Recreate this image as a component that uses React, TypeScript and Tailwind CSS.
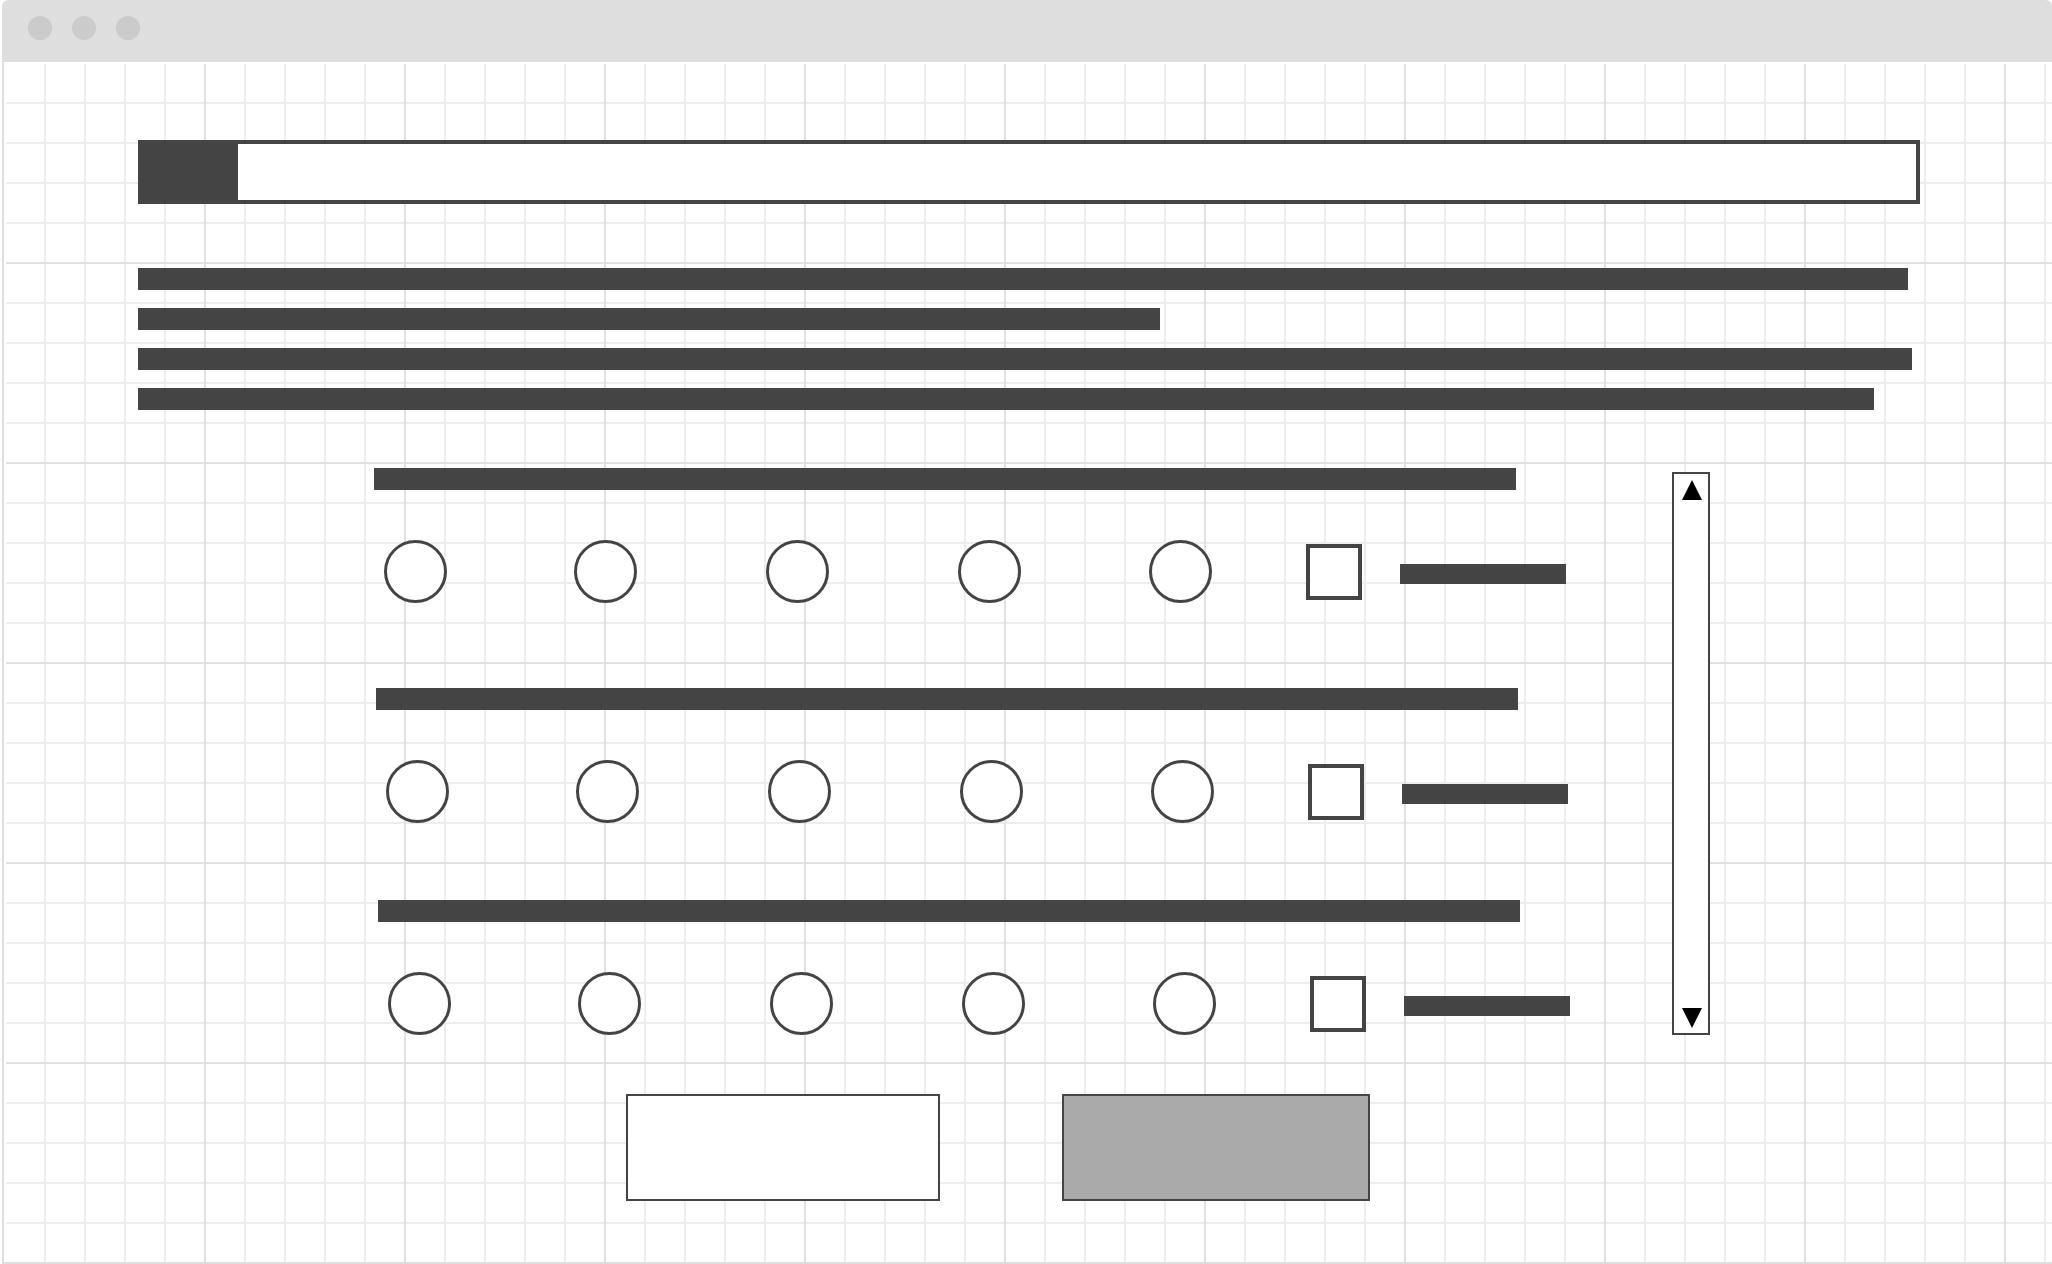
import React from "react";

function Circle({ className }: { className: string }) {
  return (
    <div
      className={
        "w-[63px] h-[63px] shrink-0 rounded-full border-[3px] border-[#444444] bg-white " +
        className
      }
    />
  );
}

function Row({ className }: { className: string }) {
  return (
    <div className={className}>
      <div className="h-[22px] w-[1142px] bg-[#444444]" />
      <div className="mt-[50px] flex items-start">
        <Circle className="ml-[10px]" />
        <Circle className="ml-[127px]" />
        <Circle className="ml-[129px]" />
        <Circle className="ml-[129px]" />
        <Circle className="ml-[128px]" />
        <div className="ml-[94px] mt-[4px] h-[56px] w-[56px] shrink-0 border-4 border-[#444444] bg-white" />
        <div className="ml-[38px] mt-[24px] h-[20px] w-[166px] shrink-0 bg-[#444444]" />
      </div>
    </div>
  );
}

export default function App() {
  return (
    <div className="flex h-[1264px] w-[2052px] flex-col overflow-hidden bg-white pl-[2px]">
      {/* title bar */}
      <div className="flex h-[62px] shrink-0 items-start gap-[20px] rounded-t-[6px] bg-[#dedede] pl-[26px] pt-[16px]">
        <div className="h-[24px] w-[24px] rounded-full bg-[#cbcbcb]" />
        <div className="h-[24px] w-[24px] rounded-full bg-[#cbcbcb]" />
        <div className="h-[24px] w-[24px] rounded-full bg-[#cbcbcb]" />
      </div>
      {/* body */}
      <div className="flex flex-1 flex-col border-b-2 border-l-2 border-[#dedede] bg-white pl-[2px] pt-[2px]">
        <div className="flex-1 [background-image:linear-gradient(to_right,transparent_198px,#e1e1e1_198px,#e1e1e1_200px,transparent_200px),linear-gradient(to_bottom,transparent_198px,#e1e1e1_198px,#e1e1e1_200px,transparent_200px),linear-gradient(to_right,transparent_38px,#ededed_38px,#ededed_40px,transparent_40px),linear-gradient(to_bottom,transparent_38px,#ededed_38px,#ededed_40px,transparent_40px)] [background-size:200px_200px,200px_200px,40px_40px,40px_40px]">
          {/* search bar */}
          <div className="ml-[132px] mt-[76px] flex h-[64px] w-[1782px] border-4 border-[#444444] bg-white">
            <div className="h-full w-[96px] bg-[#444444]" />
          </div>

          {/* text lines */}
          <div className="ml-[132px] mt-[64px] flex flex-col gap-[18px]">
            <div className="h-[22px] w-[1770px] bg-[#444444]" />
            <div className="h-[22px] w-[1022px] bg-[#444444]" />
            <div className="h-[22px] w-[1774px] bg-[#444444]" />
            <div className="h-[22px] w-[1736px] bg-[#444444]" />
          </div>

          {/* question rows + scrollbar */}
          <div className="ml-[368px] mt-[58px] flex items-start">
            <div className="flex w-[1298px] shrink-0 flex-col">
              <Row className="ml-0" />
              <Row className="ml-[2px] mt-[85px]" />
              <Row className="ml-[4px] mt-[77px]" />
            </div>
            <div className="mt-[4px] flex h-[563px] w-[38px] shrink-0 flex-col items-start justify-between border-2 border-[#444444] bg-white pb-[5px] pl-[8px] pt-[6px]">
              <svg width="20" height="20" viewBox="0 0 20 20">
                <polygon points="10,0 20,20 0,20" fill="#000" />
              </svg>
              <svg width="20" height="20" viewBox="0 0 20 20">
                <polygon points="0,0 20,0 10,20" fill="#000" />
              </svg>
            </div>
          </div>

          {/* buttons */}
          <div className="ml-[620px] mt-[59px] flex gap-[122px]">
            <div className="h-[107px] w-[314px] border-2 border-[#444444] bg-white" />
            <div className="h-[107px] w-[308px] border-2 border-[#444444] bg-[#aaaaaa]" />
          </div>
        </div>
      </div>
    </div>
  );
}
